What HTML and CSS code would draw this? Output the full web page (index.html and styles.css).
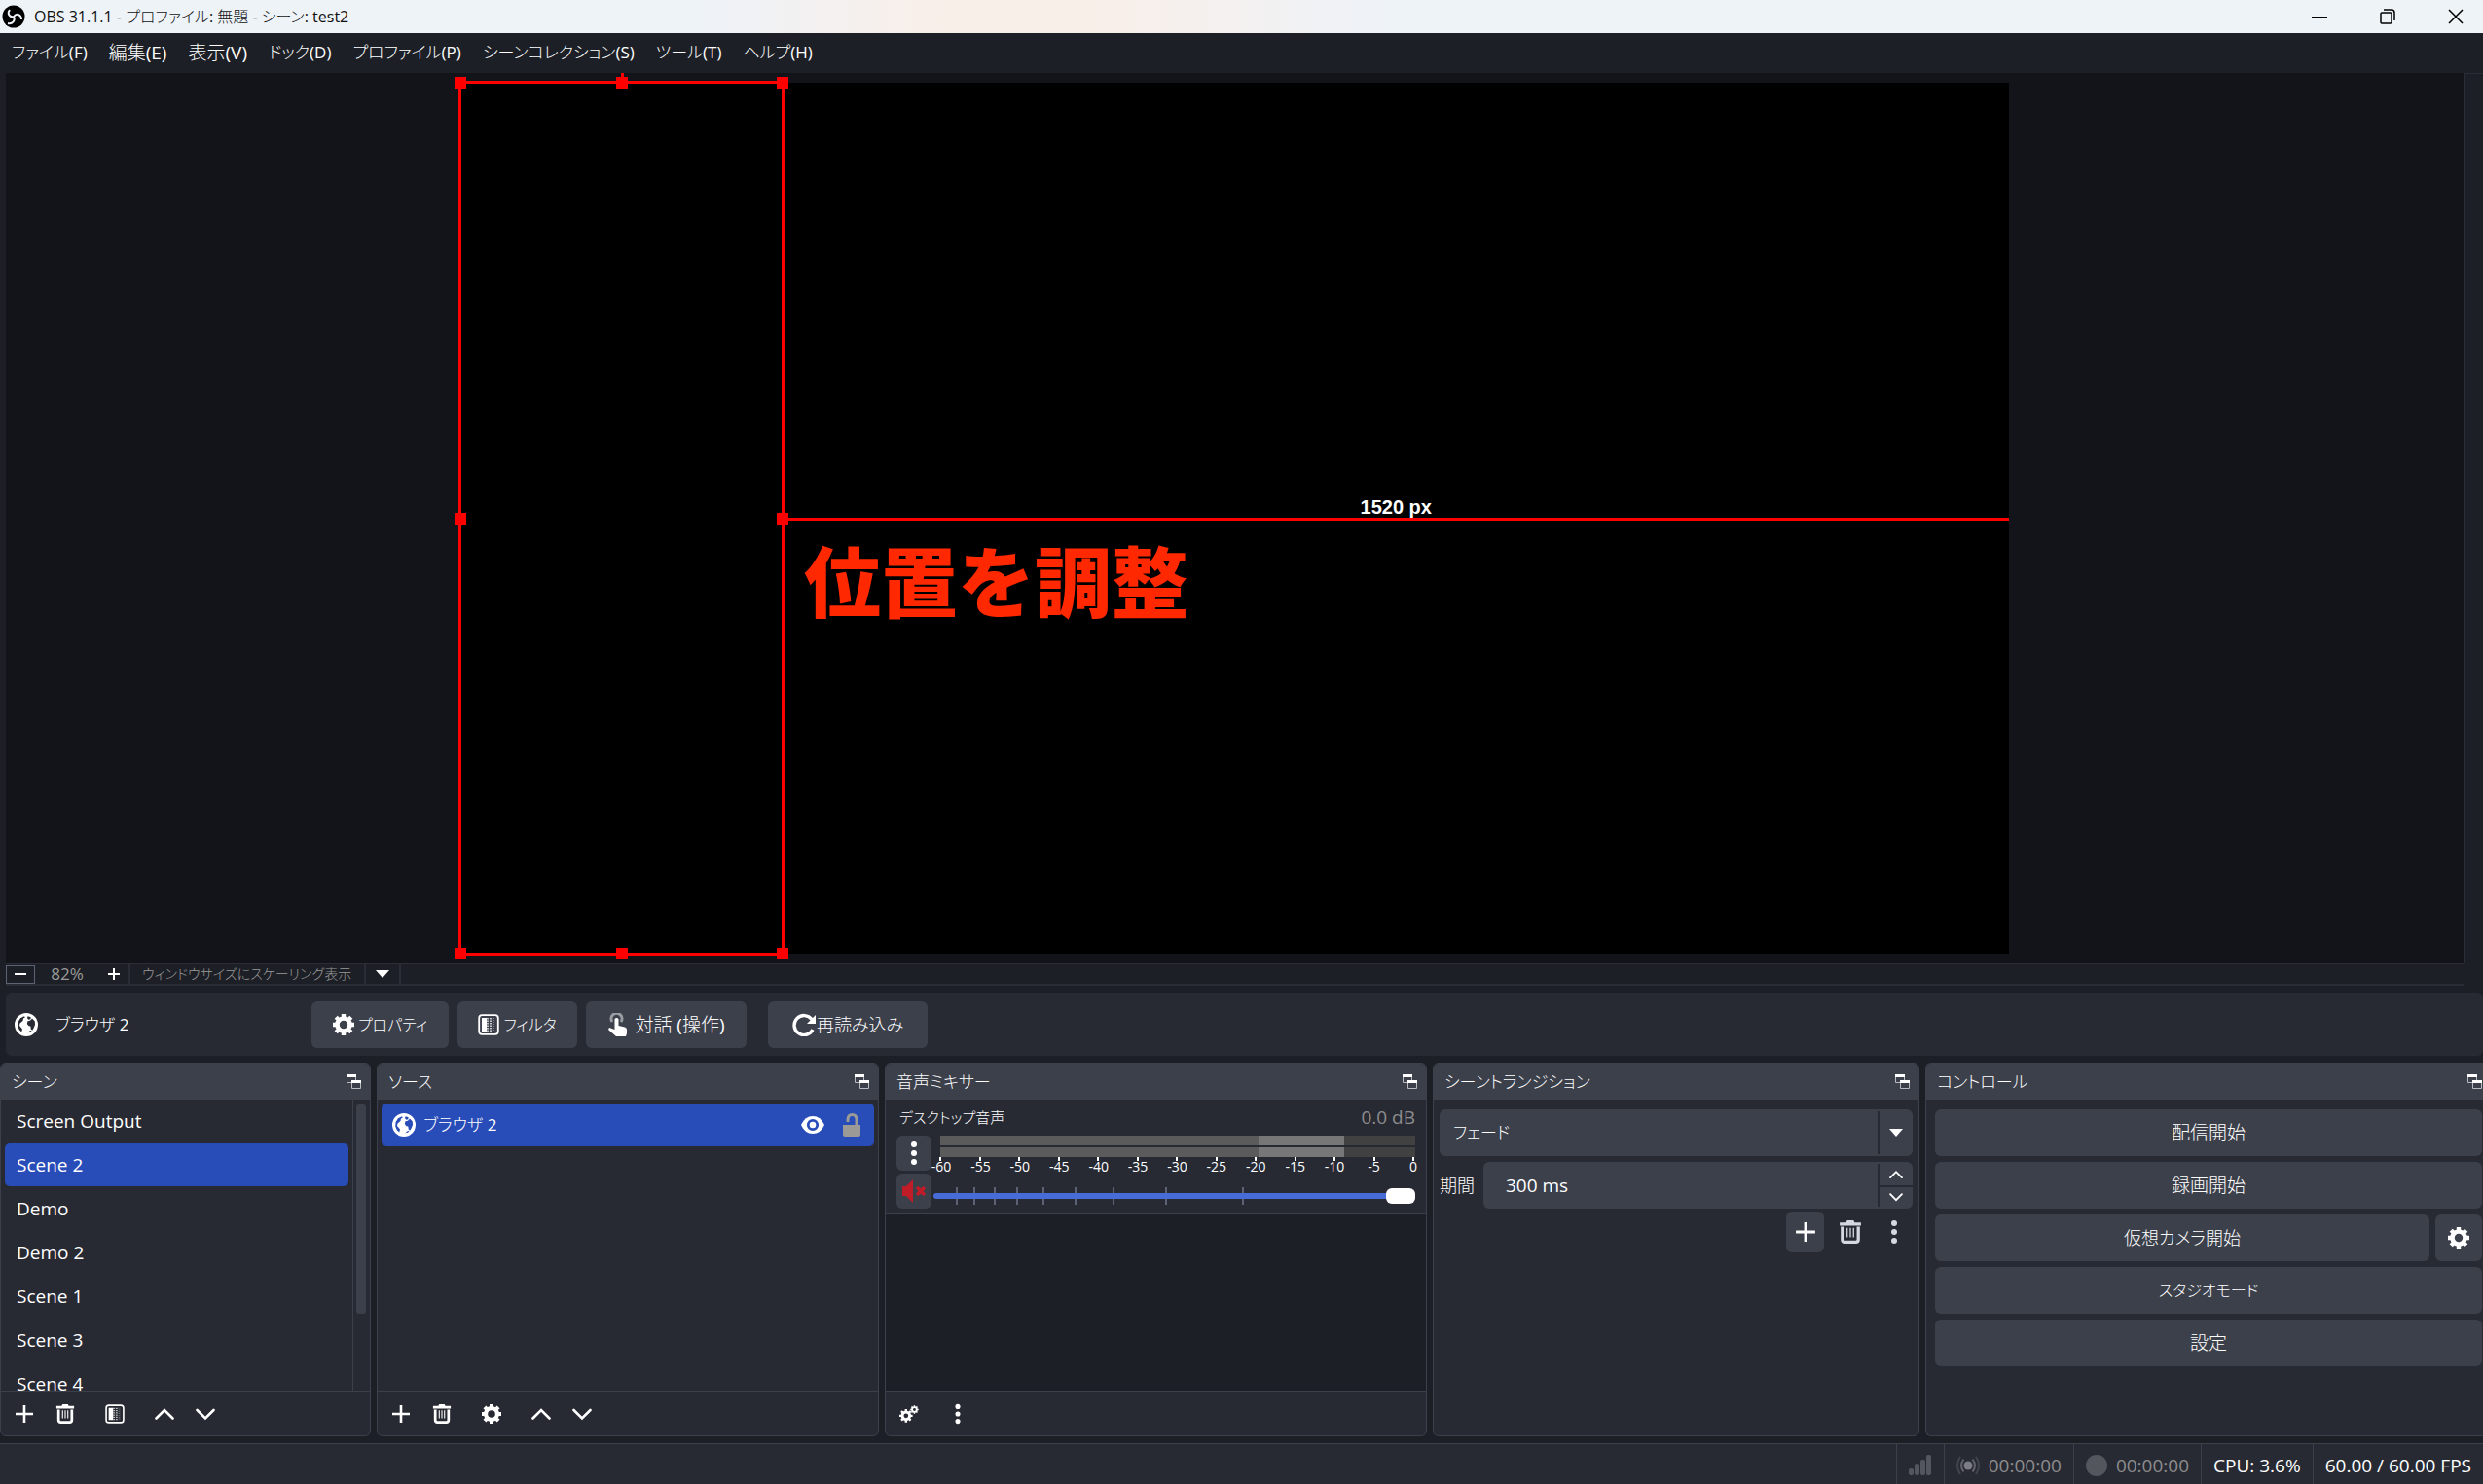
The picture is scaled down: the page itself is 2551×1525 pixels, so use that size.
FILE: index.html
```html
<!DOCTYPE html>
<html lang="ja">
<head>
<meta charset="utf-8">
<title>OBS 31.1.1 - プロファイル: 無題 - シーン: test2</title>
<link rel="stylesheet" href="styles.css">
</head>
<body>
<svg class="defs" aria-hidden="true">
  <symbol id="plus" viewBox="0 0 20 20"><path d="M10 1v18M1 10h18" stroke="currentColor" stroke-width="2.600" fill="none"/></symbol>
  <symbol id="trash" viewBox="0 0 20 22"><path d="M0 2h6l1-2h6l1 2h6v3H0z" fill="currentColor"/><path d="M2.500 6v12q0 2.500 2.500 2.500h10q2.500 0 2.500-2.500V6" fill="none" stroke="currentColor" stroke-width="3"/><path d="M7 7v9M10 7v9M13 7v9" stroke="currentColor" stroke-width="1.200"/></symbol>
  <symbol id="filter" viewBox="0 0 22 22"><rect x="1.200" y="1.200" width="19.600" height="19.600" rx="3" fill="none" stroke="currentColor" stroke-width="1.800"/><path d="M4 4h5v14H4z" fill="currentColor"/><path d="M10 4v14M13 4v14" stroke="currentColor" stroke-width="2" stroke-dasharray="1.500 1" opacity=".7"/><path d="M16 4v14" stroke="currentColor" stroke-width="2" stroke-dasharray="1 1" opacity=".35"/></symbol>
  <symbol id="up" viewBox="0 0 20 20"><path d="M1.500 14.500 10 6l8.500 8.500" fill="none" stroke="currentColor" stroke-width="2.600" stroke-linecap="round"/></symbol>
  <symbol id="down" viewBox="0 0 20 20"><path d="M1.500 6 10 14.500 18.500 6" fill="none" stroke="currentColor" stroke-width="2.600" stroke-linecap="round"/></symbol>
  <symbol id="gear" viewBox="0 0 22 22"><circle cx="11" cy="11" r="6.500" fill="none" stroke="currentColor" stroke-width="4.600"/><path d="M11 0v5M11 17v5M0 11h5M17 11h5M3.200 3.200l3.600 3.600M15.200 15.200l3.600 3.600M3.200 18.800l3.600-3.600M15.200 6.800l3.600-3.600" stroke="currentColor" stroke-width="4.400"/></symbol>
  <symbol id="gears" viewBox="0 0 22 20"><circle cx="7.500" cy="12" r="4.200" fill="none" stroke="currentColor" stroke-width="3.200"/><path d="M7.500 4.500v3M7.500 16.500v3M0 12h3M12 12h3M2.200 6.700l2 2M10.800 15.300l2 2M2.200 17.300l2-2M10.800 8.700l2-2" stroke="currentColor" stroke-width="2.600"/><circle cx="17" cy="5" r="2.600" fill="none" stroke="currentColor" stroke-width="2"/><path d="M17 .3v2M17 7.700v2M12.300 5h2M19.700 5h2M13.700 1.700l1.300 1.300M19 7l1.300 1.300M13.700 8.300 15 7M19 3l1.300-1.300" stroke="currentColor" stroke-width="1.700"/></symbol>
  <symbol id="dots" viewBox="0 0 6 26"><circle cx="3" cy="4" r="3" fill="currentColor"/><circle cx="3" cy="13" r="3" fill="currentColor"/><circle cx="3" cy="22" r="3" fill="currentColor"/></symbol>
  <symbol id="float" viewBox="0 0 16 16"><path d="M.5 1v7.500h5M9.500 3v3" fill="none" stroke="#b9bbc1"/><path d="M0 0h10v3H0z" fill="#fff"/><path d="M5.500 7v7.500h9V7" fill="none" stroke="#b9bbc1"/><path d="M5 6h10v3H5z" fill="#fff"/></symbol>
  <symbol id="globe" viewBox="0 0 24 24"><path fill-rule="evenodd" fill="currentColor" d="M12 0a12 12 0 1 1 0 24a12 12 0 1 1 0-24zM10 3.200 6 5.200 3.600 9l-.4 4.500 1.600 3.700 2.400 2.200.8-3L5 13l.5-2.500L8.500 8l.5-2.500 1.800-1zM13.500 3.200l-.5 2 1.500 1.600 1.800-.6.400-2zM18 5.500l-2 2.200-2.500.6-.7 2.700 1.700 2.200 1.800.3.600 3.500 1.600.4 1.400-2.600 1.100-2.800-.2-3.500zM16 18l-2.600 2.300 2.600-.6 1.600-1.500z"/></symbol>
  <symbol id="caret" viewBox="0 0 14 8"><path d="M0 0h14L7 8z" fill="currentColor"/></symbol>
</svg>

<header class="titlebar">
  <svg class="logo" viewBox="0 0 24 24"><circle cx="12" cy="12" r="11.500" fill="#000"/><path d="M12 12C8 13 5 9 8 5M12 12c3-4 8-2 8 3M12 12c2 4-1 8-6 7" fill="none" stroke="#eef3f8" stroke-width="2"/></svg>
  <h1 class="title">OBS 31.1.1 - プロファイル: 無題 - シーン: test2</h1>
  <div class="window-buttons">
    <button aria-label="最小化"><svg width="16" height="16"><path d="M0 8.500h16" stroke="#000"/></svg></button>
    <button aria-label="元に戻す"><svg width="16" height="16" fill="none" stroke="#000" stroke-width="1.500"><rect x="1" y="4" width="11" height="11" rx="1"/><path d="M4 1h8q3 0 3 3v8"/></svg></button>
    <button aria-label="閉じる"><svg width="16" height="16"><path d="m1 1 14 14M15 1 1 15" stroke="#000" stroke-width="1.500"/></svg></button>
  </div>
</header>

<nav class="menubar">
  <button class="kana">ファイル(F)</button><button>編集(E)</button><button>表示(V)</button><button class="kana">ドック(D)</button><button class="kana">プロファイル(P)</button><button class="kana">シーンコレクション(S)</button><button class="kana">ツール(T)</button><button class="kana">ヘルプ(H)</button>
</nav>

<main class="preview">
  <div class="stage">
    <div class="canvas">
      <div class="measure"><span>1520 px</span></div>
      <div class="selection">
        <i class="stem"></i>
        <i class="handle nw"></i><i class="handle n"></i><i class="handle ne"></i>
        <i class="handle w"></i><i class="handle e"></i>
        <i class="handle sw"></i><i class="handle s"></i><i class="handle se"></i>
      </div>
      <p class="caption">位置を調整</p>
    </div>
  </div>
  <div class="vscroll"></div>
</main>

<div class="zoombar">
  <button class="zoom-out" aria-label="縮小"><svg width="12" height="12"><path d="M0 6h12" stroke="#fff" stroke-width="2"/></svg></button>
  <span class="zoom-value">82%</span>
  <button class="zoom-in" aria-label="拡大"><svg width="12" height="12"><path d="M0 6h12M6 0v12" stroke="#fff" stroke-width="2"/></svg></button>
  <div class="scale-mode"><select aria-label="スケーリング"><option>ウィンドウサイズにスケーリング表示</option></select><svg class="caret"><use href="#caret"/></svg></div>
</div>

<section class="context">
  <div class="source-name"><svg class="i24"><use href="#globe"/></svg><span class="kana">ブラウザ 2</span></div>
  <button class="btn narrow-kana properties"><svg class="i22"><use href="#gear"/></svg>プロパティ</button>
  <button class="btn narrow-kana filters"><svg class="i22"><use href="#filter"/></svg>フィルタ</button>
  <button class="btn interact"><svg class="i24" viewBox="0 0 24 24"><path d="M5 9a5.500 5.500 0 1 1 9 0" fill="none" stroke="#9a9ca3" stroke-width="3"/><path d="M7.500 6q2-2 4 0v7l6.500 1.500q2 .5 2 2.500v4l-1 3H9l-8-7 1-2 5.500 2z" fill="#fff"/></svg>対話 (操作)</button>
  <button class="btn reload"><svg class="i24" viewBox="0 0 24 24"><path d="M20 6.500A10 10 0 1 0 21 17" fill="none" stroke="#fff" stroke-width="3.400"/><path d="M24 2v9h-9z" fill="#fff"/></svg>再読み込み</button>
</section>

<div class="docks">
  <section class="dock">
    <header><h2>シーン</h2><button aria-label="切り離す"><svg class="i16"><use href="#float"/></svg></button></header>
    <div class="body scenes">
      <ul>
        <li>Screen Output</li><li class="selected">Scene 2</li><li>Demo</li><li>Demo 2</li><li>Scene 1</li><li>Scene 3</li><li>Scene 4</li>
      </ul>
      <div class="scrollbar"><i></i></div>
    </div>
    <footer>
      <button aria-label="追加"><svg class="i20"><use href="#plus"/></svg></button>
      <button aria-label="削除"><svg class="i20"><use href="#trash"/></svg></button>
      <button class="spaced" aria-label="フィルタ"><svg class="i20"><use href="#filter"/></svg></button>
      <button class="spaced" aria-label="上へ"><svg class="i20"><use href="#up"/></svg></button>
      <button aria-label="下へ"><svg class="i20"><use href="#down"/></svg></button>
    </footer>
  </section>

  <section class="dock">
    <header><h2>ソース</h2><button aria-label="切り離す"><svg class="i16"><use href="#float"/></svg></button></header>
    <div class="body">
      <div class="source-row">
        <svg class="i24"><use href="#globe"/></svg><span class="kana">ブラウザ 2</span>
        <button aria-label="表示"><svg class="i24" viewBox="0 0 24 24"><path d="M0 12Q4 3 12 3t12 9q-4 9-12 9T0 12z" fill="#fff"/><circle cx="12" cy="12" r="4.700" fill="none" stroke="#284cb8" stroke-width="2.800"/></svg></button>
        <button aria-label="ロック"><svg class="i24" viewBox="0 0 24 24"><path d="M3 12h18v10q0 2-2 2H5q-2 0-2-2z" fill="#9c9a96"/><path d="M8 9V7q0-5.500 4.500-5.500T17 7v5" fill="none" stroke="#9c9a96" stroke-width="3"/></svg></button>
      </div>
    </div>
    <footer>
      <button aria-label="追加"><svg class="i20"><use href="#plus"/></svg></button>
      <button aria-label="削除"><svg class="i20"><use href="#trash"/></svg></button>
      <button class="spaced" aria-label="プロパティ"><svg class="i20"><use href="#gear"/></svg></button>
      <button class="spaced" aria-label="上へ"><svg class="i20"><use href="#up"/></svg></button>
      <button aria-label="下へ"><svg class="i20"><use href="#down"/></svg></button>
    </footer>
  </section>

  <section class="dock">
    <header><h2>音声ミキサー</h2><button aria-label="切り離す"><svg class="i16"><use href="#float"/></svg></button></header>
    <div class="body mixer">
      <div class="channel">
        <div class="channel-head"><label class="small-kana" for="vol">デスクトップ音声</label><output>0.0 dB</output></div>
        <div class="channel-main">
          <div class="channel-buttons">
            <button class="btn" aria-label="メニュー"><svg class="dots"><use href="#dots"/></svg></button>
            <button class="btn" aria-label="ミュート解除"><svg class="i24" viewBox="0 0 24 24"><path d="M0 7h4l7-7v24l-7-7H0z" fill="#c01c28"/><path d="m15 8 8 8M23 8l-8 8" stroke="#c01c28" stroke-width="3.600"/></svg></button>
          </div>
          <div class="levels">
            <div class="meter"></div><div class="meter"></div>
            <div class="ticks"><i></i><i></i><i></i><i></i><i></i><i></i><i></i><i></i><i></i><i></i><i></i><i></i><i></i></div>
            <div class="scale"><span>-60</span><span>-55</span><span>-50</span><span>-45</span><span>-40</span><span>-35</span><span>-30</span><span>-25</span><span>-20</span><span>-15</span><span>-10</span><span>-5</span><span>0</span></div>
            <div class="volume">
              <svg viewBox="0 0 495 18" preserveAspectRatio="none"><path d="M24 0v18M42 0v18M63 0v18M86 0v18M113 0v18M146 0v18M185 0v18M239 0v18M318 0v18" stroke="#5b6273" stroke-width="2"/></svg>
              <input type="range" id="vol" min="0" max="100" value="100">
            </div>
          </div>
        </div>
      </div>
    </div>
    <footer>
      <button aria-label="音声の詳細設定"><svg class="i20"><use href="#gears"/></svg></button>
      <button class="menu" aria-label="メニュー"><svg class="dots small"><use href="#dots"/></svg></button>
    </footer>
  </section>

  <section class="dock">
    <header><h2>シーントランジション</h2><button aria-label="切り離す"><svg class="i16"><use href="#float"/></svg></button></header>
    <div class="body transitions">
      <div class="field combo"><select class="kana" aria-label="トランジション"><option>フェード</option></select><span class="side"><svg class="caret"><use href="#caret"/></svg></span></div>
      <div class="duration">
        <label for="duration">期間</label>
        <div class="field"><input id="duration" type="text" value="300 ms"><span class="side spin"><button aria-label="増やす"><svg class="i14"><use href="#up"/></svg></button><button aria-label="減らす"><svg class="i14"><use href="#down"/></svg></button></span></div>
      </div>
      <div class="transition-buttons">
        <button class="btn" aria-label="追加"><svg class="i22"><use href="#plus"/></svg></button>
        <button aria-label="削除"><svg class="i24"><use href="#trash"/></svg></button>
        <button aria-label="メニュー"><svg class="dots"><use href="#dots"/></svg></button>
      </div>
    </div>
  </section>

  <section class="dock last">
    <header><h2>コントロール</h2><button aria-label="切り離す"><svg class="i16"><use href="#float"/></svg></button></header>
    <div class="body controls">
      <button class="btn">配信開始</button>
      <button class="btn">録画開始</button>
      <div class="split"><button class="btn mixed">仮想カメラ開始</button><button class="btn cog" aria-label="仮想カメラの設定"><svg class="i22"><use href="#gear"/></svg></button></div>
      <button class="btn narrow-kana">スタジオモード</button>
      <button class="btn">設定</button>
    </div>
  </section>
</div>

<footer class="statusbar">
  <div class="cell"><svg class="i24" viewBox="0 0 24 24"><g fill="#54565e"><rect x="0" y="15" width="5" height="7" rx="2"/><rect x="6" y="10" width="5" height="12" rx="2"/><rect x="12" y="6" width="5" height="16" rx="2"/><rect x="18" y="1" width="5" height="21" rx="2"/></g></svg></div>
  <div class="cell dim"><svg class="i24" viewBox="0 0 24 24"><circle cx="12" cy="12" r="4.500" fill="#7c7e84"/><path d="M7.500 5.500q-5 6.500 0 13M16.500 5.500q5 6.500 0 13" fill="none" stroke="#62646b" stroke-width="2"/><path d="M4 3q-6 9 0 18M20 3q6 9 0 18" fill="none" stroke="#41444d" stroke-width="2"/></svg>00:00:00</div>
  <div class="cell dim"><svg class="i22" viewBox="0 0 22 22"><circle cx="11" cy="11" r="11" fill="#54565e"/></svg>00:00:00</div>
  <div class="cell">CPU: 3.6%</div>
  <div class="cell">60.00 / 60.00 FPS</div>
</footer>
</body>
</html>
```
FILE: styles.css
```css
* { box-sizing: border-box; }

body {
  margin: 0;
  min-height: 100vh;
  display: flex;
  flex-direction: column;
  background: #1d1f26;
  color: #fff;
  font: 19px/24px "Open Sans", "Noto Sans CJK JP Light", "Noto Sans CJK JP DemiLight", "Noto Sans CJK JP", sans-serif;
  font-feature-settings: "palt";
}

button, input, select {
  font: inherit;
  font-feature-settings: inherit;
  color: inherit;
  background: none;
  border: 0;
  padding: 0;
  margin: 0;
}

select { appearance: none; }
h1, h2, p, ul { margin: 0; padding: 0; }
svg { display: block; flex: none; }

.defs { position: absolute; width: 0; height: 0; }
.i14 { width: 14px; height: 14px; }
.i16 { width: 16px; height: 16px; }
.i20 { width: 20px; height: 20px; }
.i22 { width: 22px; height: 22px; }
.i24 { width: 24px; height: 24px; }
.dots { width: 6px; height: 26px; }
.dots.small { height: 22px; }
.caret { width: 14px; height: 8px; pointer-events: none; }
.kana { font-size: 17px; }
.small-kana { font-size: 15px; }
.mixed { font-size: 18px; }
.narrow-kana { font-size: 16px; }

.titlebar {
  display: flex;
  align-items: center;
  height: 34px;
  padding: 0 20px 0 2px;
  gap: 9px;
  background: linear-gradient(90deg, #eef3f8 28%, #f9efe9 38%, #f9efe9 44%, #eef3f8 56%);
  color: #111;
}

.logo { width: 24px; height: 24px; }
.title { font-size: 16px; font-weight: 400; }
.window-buttons { display: flex; gap: 54px; margin-left: auto; }

.menubar {
  display: flex;
  align-items: center;
  gap: 22px;
  height: 41px;
  padding: 0 12px 2px;
}

.menubar button { font-size: 19px; }
.menubar .kana { font-size: 17px; }

.preview { flex: 1; display: flex; min-height: 300px; padding-left: 6px; }

.stage {
  flex: 1;
  display: flex;
  justify-content: center;
  padding: 10px 0;
  background: #131419;
  overflow: hidden;
}

.vscroll { width: 20px; border: solid #2a2d35; border-width: 1px 0 0 1px; }
.canvas { position: relative; aspect-ratio: 16 / 9; background: #000; }

.selection {
  position: absolute;
  inset: 0 auto 0 0;
  width: calc(100% * 400 / 1920);
}

.selection::before { content: ""; position: absolute; inset: -2px; border: 3px solid #f00; }
.handle { position: absolute; width: 12px; height: 12px; margin: -6px; background: #f00; }
.nw, .n, .ne { top: 0; }
.w, .e { top: 50%; }
.sw, .s, .se { top: 100%; }
.nw, .w, .sw { left: 0; }
.n, .s { left: 50%; }
.ne, .e, .se { left: 100%; }
.stem { position: absolute; left: 50%; bottom: 100%; width: 3px; height: 20px; margin-left: -1px; background: #f00; }

.measure {
  position: absolute;
  left: calc(100% * 400 / 1920);
  right: 0;
  bottom: 50%;
  margin-bottom: -2px;
  border-bottom: 3px solid #f00;
  text-align: center;
  font: bold 20px/22px "Liberation Sans", sans-serif;
}

.measure span { display: block; }

.caption {
  position: absolute;
  left: 22%;
  top: 50%;
  margin: 12px 0 0 3px;
  color: #ff2800;
  font: 900 79px/100px "Noto Sans CJK JP", sans-serif;
  font-feature-settings: normal;
  white-space: nowrap;
}

.zoombar {
  display: flex;
  align-items: center;
  height: 23px;
  margin: 0 20px 0 6px;
  border: solid #2a2d35;
  border-width: 1px 0 2px;
  color: #9b9a98;
}

.zoom-out { display: grid; place-items: center; width: 30px; height: 19px; border: 1px solid #5b6273; }
.zoom-value { width: 66px; text-align: center; font-size: 17px; }
.zoom-in { display: grid; place-items: center; width: 30px; }
.scale-mode { display: flex; align-items: center; align-self: stretch; border: solid #2a2d35; border-width: 0 2px; padding-right: 10px; }
.scale-mode select { width: 242px; padding-left: 12px; line-height: 20px; border-right: 2px solid #2a2d35; font-size: 14px; }
.scale-mode .caret { margin-left: 10px; color: #fff; }

.btn {
  display: flex;
  align-items: center;
  justify-content: center;
  height: 48px;
  border-radius: 6px;
  background: #3c404b;
}

.context {
  display: flex;
  align-items: center;
  gap: 9px;
  height: 65px;
  margin: 7px 0 7px 6px;
  padding: 0 9px;
  border-radius: 6px;
  background: #272a33;
}

.source-name { display: flex; align-items: center; gap: 18px; width: 296px; }
.context .btn { gap: 4px; }
.properties { width: 141px; }
.filters { width: 123px; }
.interact { width: 165px; }
.reload { width: 164px; margin-left: 13px; }
.context .reload { gap: 1px; font-size: 18px; }

.docks {
  display: grid;
  grid-template-columns: 381fr 516fr 557fr 500fr 573fr;
  gap: 6px;
  height: 384px;
}

.dock {
  display: flex;
  flex-direction: column;
  min-width: 0;
  border: 1px solid #3c404b;
  border-radius: 6px;
  background: #272a33;
  overflow: hidden;
}

.last { border-right: 0; border-radius: 6px 0 0 6px; }

.dock > header {
  display: flex;
  align-items: center;
  justify-content: space-between;
  height: 37px;
  padding: 0 8px 0 11px;
  background: #3c404b;
}

.last > header { padding-right: 0; }
.dock h2 { font-size: 17px; font-weight: 400; }
.body { flex: 1; min-height: 0; }

.dock > footer {
  display: flex;
  align-items: center;
  gap: 22px;
  height: 46px;
  padding: 0 14px;
  border-top: 1px solid #3c404b;
}

.spaced { margin-left: 9px; }
.menu { margin-left: 15px; }

.scenes { display: flex; overflow: hidden; }
.scenes ul { flex: 1; list-style: none; padding-left: 4px; }
.scenes li { height: 44px; margin: 0 4px 1px 0; padding-left: 12px; line-height: 44px; border-radius: 5px; }
.scenes .selected { background: #284cb8; }
.scrollbar { width: 18px; padding: 5px 0 0 3px; border-left: 1px solid #3c404b; }
.scrollbar i { display: block; width: 10px; height: 215px; border-radius: 3px; background: #3c404b; }

.source-row {
  display: flex;
  align-items: center;
  gap: 16px;
  height: 44px;
  margin: 4px 4px 0;
  padding: 0 11px;
  border-radius: 5px;
  background: #284cb8;
}

.source-row span { flex: 1; margin-left: -8px; }

.mixer { background: #1d1f26; }
.channel { height: 118px; padding: 6px 11px 0 11px; border-bottom: 2px solid #3c404b; background: #272a33; }
.channel-head { display: flex; justify-content: space-between; align-items: center; height: 24px; padding-left: 3px; }
.channel output { color: #8d8c8c; }
.channel-main { display: flex; gap: 2px; margin-top: 7px; }
.channel-buttons { display: grid; gap: 3px; }
.channel-buttons .btn { width: 36px; height: 36px; }
.levels { flex: 1; min-width: 0; }
.meter { height: 10px; margin: 0 0 2px 7px; background: linear-gradient(90deg, #5b5b5b 67%, #777 67% 85%, #414141 85%); }
.ticks { display: flex; justify-content: space-between; margin: -2px 1px 0 6px; }
.ticks i { width: 2px; height: 4px; background: #fff; }
.scale { display: flex; justify-content: space-between; height: 12px; margin: 0 1px 0 7px; font-size: 14px; line-height: 12px; }
.scale span { display: flex; justify-content: center; width: 2px; }
.volume { display: grid; align-items: center; height: 18px; margin-top: 15px; }
.volume svg, .volume input { grid-area: 1 / 1; width: 100%; height: 18px; }
.volume input { appearance: none; z-index: 1; }
.volume input::-webkit-slider-runnable-track { height: 6px; border-radius: 3px; background: #476bd7; }
.volume input::-webkit-slider-thumb { appearance: none; width: 30px; height: 16px; margin-top: -5px; border-radius: 6px; background: #fff; }

.transitions { padding: 10px 6px; }
.field { display: flex; flex: 1; height: 48px; border-radius: 6px; background: #3c404b; }
.field select, .field input { flex: 1; min-width: 0; }
.field select { padding-left: 14px; }
.field input { padding-left: 23px; }
.side { display: grid; place-items: center; width: 36px; margin: 2px 0; border-left: 2px solid #272a33; }
.spin button { display: grid; place-items: center; width: 100%; height: 22px; }
.spin button + button { border-top: 2px solid #272a33; }
.duration { display: flex; align-items: center; gap: 8px; margin: 6px 0 3px; }
.duration label { width: 37px; font-size: 18px; }
.transition-buttons { display: flex; align-items: center; justify-content: flex-end; gap: 15px; padding-right: 16px; color: #d5d8e2; }
.transition-buttons .btn { width: 39px; height: 42px; color: #fff; }
.transition-buttons .dots { margin-left: 15px; }

.controls { display: grid; align-content: start; gap: 6px; padding: 10px 1px 0 9px; }
.controls .btn { width: 100%; }
.split { display: grid; grid-template-columns: 1fr 48px; gap: 6px; }

.statusbar {
  display: flex;
  justify-content: flex-end;
  height: 42px;
  margin-top: 7px;
  border-top: 1px solid #3c404b;
  background: #272a33;
}

.cell { display: flex; align-items: center; gap: 9px; padding: 2px 12px 0; border-left: 1px solid #3c404b; }
.dim { color: #8d8c8c; }
```
